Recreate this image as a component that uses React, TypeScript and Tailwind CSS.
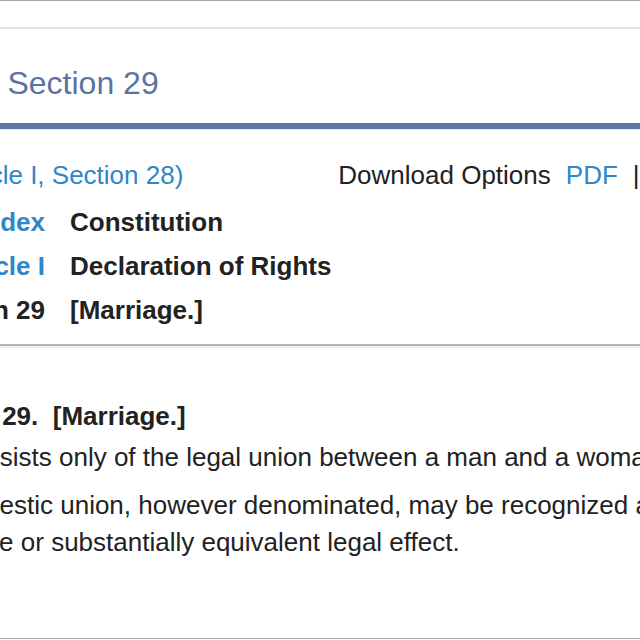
export default function App() {
  const link = "text-[#2f87c9]";

  return (
    <div className="w-[640px] h-[640px] overflow-hidden bg-white font-['Liberation_Sans',Arial,Helvetica,sans-serif] text-[#222]">
      <div className="-ml-[300px] w-[1200px]">
        {/* top strip */}
        <div className="h-px bg-[#a8a8a8]" />
        <div className="h-[26px]" />
        <div className="h-[2px] bg-[#e3e3e3]" />

        {/* page heading */}
        <div className="pl-[183px] pt-[36px] pb-[22px]">
          <h1 className="text-[32px] leading-[36px] text-[#5a74a1] whitespace-nowrap">Article I, Section 29</h1>
        </div>
        <div className="h-[6px] bg-[#5b77a6]" />
        <div className="h-px bg-[#e2e7f0]" />

        {/* nav row */}
        <div className="flex pl-[18px] pt-[23px] text-[26px] leading-[44px] whitespace-nowrap">
          <a className={link}>« Previous Section (Article I, Section 28)</a>
          <div className="ml-[155px] flex gap-[15px]">
            <span>Download Options</span>
            <a className={link}>PDF</a>
            <span>|</span>
            <a className={link}>RTF</a>
            <span>|</span>
            <a className={link}>XML</a>
          </div>
        </div>

        {/* breadcrumb table */}
        <div className="grid grid-cols-[345px_1fr] gap-x-[25px] mt-[3px] text-[26px] leading-[44px] font-bold whitespace-nowrap">
          <a className={`${link} text-right`}>Index</a>
          <span>Constitution</span>
          <a className={`${link} text-right`}>Article I</a>
          <span>Declaration of Rights</span>
          <span className="text-right">Section 29</span>
          <span>[Marriage.]</span>
        </div>

        <div className="mt-[12px] h-[2px] bg-[#b3b3b3]" />
        <div className="h-[2px] bg-[#ececec]" />

        {/* section body */}
        <div className="text-[26px] leading-[37px] whitespace-nowrap">
          <div className="mt-[50px] pl-[201px] font-bold">Section 29.{"\u00a0\u00a0"}[Marriage.]</div>
          <p className="mt-[4px] pl-[109px]">(1) Marriage consists only of the legal union between a man and a woman.</p>
          <p className="mt-[11px] pl-[250px] indent-[-147px]">
            (2) No other domestic union, however denominated, may be recognized as a marriage or given the
            <br />
            same or substantially equivalent legal effect.
          </p>
        </div>

        <div className="mt-[77px] h-px bg-[#b0b0b0]" />
      </div>
    </div>
  );
}
